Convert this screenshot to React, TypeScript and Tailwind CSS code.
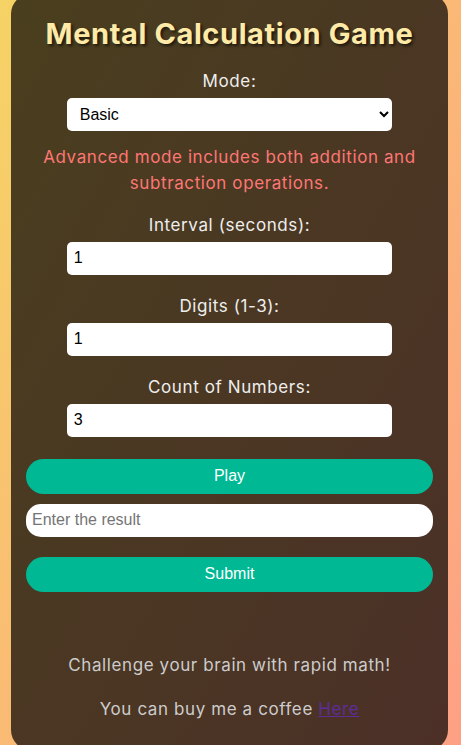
import React from "react";

export default function App() {
  const label = "block text-[17px] leading-[26px] tracking-[0.6px] text-[#eeeeee]";
  const input =
    "block mx-auto w-[80%] h-[33px] bg-white rounded-[5px] px-[7px] text-[16px] text-black font-['Liberation_Sans',Arial,sans-serif] outline-none";
  return (
    <div className="h-screen overflow-hidden flex items-center justify-center bg-[linear-gradient(120deg,#f6d365,#fda085)] font-['Inter',sans-serif]">
      <div className="w-[437px] shrink-0 -translate-x-[1px] -translate-y-[1px] bg-black/70 rounded-[20px] px-[15px] pt-[23px] pb-[28px] text-center">
        <h1 className="text-[29px] leading-[34px] tracking-[0.6px] font-bold text-[#ffeaa7] [text-shadow:2px_2px_3px_rgba(0,0,0,0.6)]">
          Mental Calculation Game
        </h1>
        <label className={label + " mt-[17px]"}>Mode:</label>
        <select
          className={input + " mt-[4px] pl-[9px]"}
          defaultValue="basic"
        >
          <option value="basic">Basic</option>
          <option value="advanced">Advanced</option>
        </select>
        <p className="mt-[13px] text-[17px] leading-[26px] tracking-[0.6px] text-[#ff7675]">
          Advanced mode includes both addition and subtraction operations.
        </p>
        <label className={label + " mt-[16px]"}>Interval (seconds):</label>
        <input className={input + " mt-[4px]"} defaultValue="1" />
        <label className={label + " mt-[18px]"}>Digits (1-3):</label>
        <input className={input + " mt-[4px]"} defaultValue="1" />
        <label className={label + " mt-[18px]"}>Count of Numbers:</label>
        <input className={input + " mt-[4px]"} defaultValue="3" />
        <button className="block w-full h-[35px] mt-[22px] rounded-full bg-[#00b894] text-white text-[16px] font-['Liberation_Sans',Arial,sans-serif]">
          Play
        </button>
        <input
          className="block w-full h-[33px] mt-[10px] rounded-[15px] bg-white px-[6px] text-[16px] font-['Liberation_Sans',Arial,sans-serif] placeholder:text-[#757575] outline-none"
          placeholder="Enter the result"
        />
        <button className="block w-full h-[35px] mt-[20px] rounded-full bg-[#00b894] text-white text-[16px] font-['Liberation_Sans',Arial,sans-serif]">
          Submit
        </button>
        <p className="mt-[60px] text-[17px] leading-[26px] tracking-[0.6px] text-[#cccccc]">
          Challenge your brain with rapid math!
        </p>
        <p className="mt-[18px] text-[17px] leading-[26px] tracking-[0.6px] text-[#cccccc]">
          You can buy me a coffee{" "}
          <a href="#" className="underline decoration-solid decoration-[#5b2d99] text-[#5b2d99]">
            Here
          </a>
        </p>
      </div>
    </div>
  );
}
